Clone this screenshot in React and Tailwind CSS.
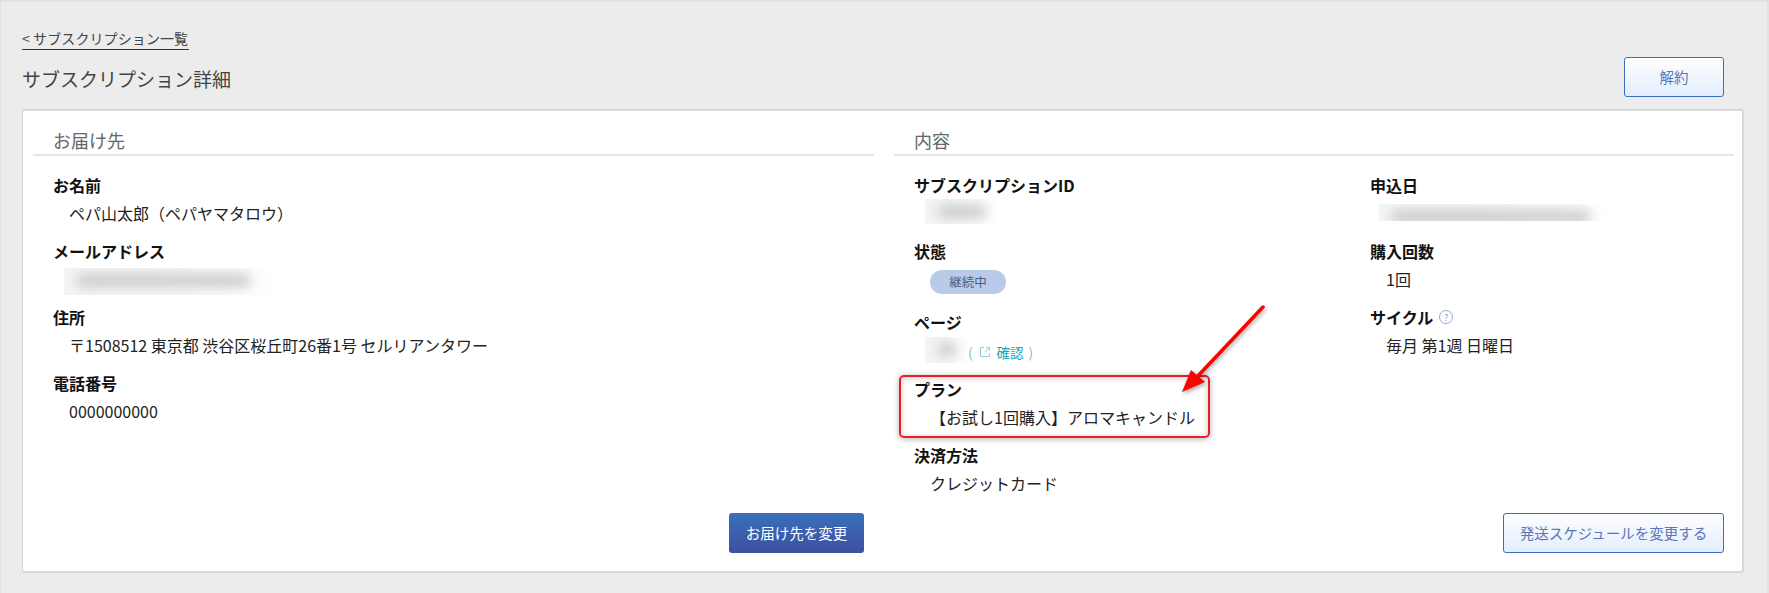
const font = { fontFamily: '"Noto Sans CJK JP", "Liberation Sans", sans-serif' };

const Label = ({ children }) => (
  <div className="h-[24px] text-[16px] leading-[24px] font-bold text-[#111]">{children}</div>
);

const Value = ({ children }) => (
  <div className="h-[42px] whitespace-nowrap pl-[16px] pt-[4px] text-[16px] leading-[24px] text-[#222]">{children}</div>
);

// blurred-out personal data
const Blur = ({ w, h = 26, inner, ml = 0 }) => (
  <div className="overflow-hidden bg-gradient-to-r from-[#f4f4f4] via-[#f6f6f6] to-white" style={{ width: w, height: h, marginLeft: ml }}>
    <div className="mx-[12px] mt-[6px] h-[13px] rounded-full bg-[#cbcbcb] blur-[6px]" style={{ width: inner }} />
  </div>
);

const SectionHead = ({ children }) => (
  <div className="h-[45px] border-b-2 border-[#e6e6e6] pl-[20px] pt-[16px] text-[18px] leading-[26px] text-[#666]">
    {children}
  </div>
);

export default function App() {
  return (
    <div style={font} className="relative h-[593px] w-[1769px] overflow-hidden border-t-2 border-l border-r-2 border-[#e2e2e2] bg-[#ececec]">
      <div className="px-[21px] pt-[26px]">
        <a className="block w-[167px] whitespace-nowrap border-b border-[#333] pb-[1px] text-[14px] leading-[20px] tracking-[0.1px] text-[#444]">
          &lt; サブスクリプション一覧
        </a>
        <div className="flex h-[59px] items-start justify-between">
          <h1 className="mt-[15px] text-[19px] leading-[28px] text-[#444]">サブスクリプション詳細</h1>
          <button className="mr-[22px] mt-[7px] h-[40px] w-[100px] rounded-[3px] border border-[#3a6ebd] bg-gradient-to-b from-white to-[#e2edfd] text-[14.5px] text-[#5a76b8]">
            解約
          </button>
        </div>

        <div className="flex h-[464px] w-[1722px] gap-[20px] rounded-[3px] border-t-2 border-r-2 border-b-2 border-l border-[#d8d8d8] bg-white pl-[10px] pr-[8px]">
          {/* お届け先 */}
          <section className="flex w-[841px] flex-col">
            <SectionHead>お届け先</SectionHead>
            <div className="flex-1 pl-[20px] pt-[17px]">
              <Label>お名前</Label>
              <Value>ペパ山太郎（ペパヤマタロウ）</Value>
              <Label>メールアドレス</Label>
              <div className="h-[42px] pt-[5px]"><Blur w={213} h={27} inner={175} ml={11} /></div>
              <Label>住所</Label>
              <Value>〒1508512 東京都 渋谷区桜丘町26番1号 セルリアンタワー</Value>
              <Label>電話番号</Label>
              <Value>0000000000</Value>
            </div>
            <div className="flex justify-end pb-[18px] pr-[10px]">
              <button className="h-[40px] w-[135px] rounded-[3px] bg-gradient-to-b from-[#3a6fbd] to-[#3b50a0] text-[14.5px] text-white">
                お届け先を変更
              </button>
            </div>
          </section>

          {/* 内容 */}
          <section className="flex w-[840px] flex-col">
            <SectionHead>内容</SectionHead>
            <div className="flex flex-1 pl-[20px] pt-[17px]">
              <div className="w-[456px]">
                <Label>サブスクリプションID</Label>
                <div className="h-[42px] pt-[2px]"><Blur w={74} h={25} inner={50} ml={11} /></div>
                <Label>状態</Label>
                <div className="h-[47px] pl-[16px] pt-[7px]">
                  <span className="flex h-[24px] w-[76px] items-center justify-center rounded-full bg-[#b9cbe9] text-[12.5px] text-[#4a5f85]">
                    継続中
                  </span>
                </div>
                <Label>ページ</Label>
                <div className="flex h-[43px] items-start pt-[3px]">
                  <Blur w={43} inner={20} ml={11} />
                  <span className="flex h-[30px] items-center whitespace-nowrap text-[13.5px] text-[#17a9b0]">
                    <span className="text-[#6fc3c8]">(</span>
                    <svg width="12" height="12" viewBox="0 0 12 12" fill="none" stroke="#9ccdd2" strokeWidth="1" className="ml-[6px] mr-[6px]">
                      <path d="M5 1.5H1.5v9h9V7M5.5 6.5L10.5 1.5M7 1.5h3.5V5" />
                    </svg>
                    <span>確認</span>
                    <span className="ml-[5px] text-[#6fc3c8]">)</span>
                  </span>
                </div>
                <Label>プラン</Label>
                <Value>【お試し1回購入】アロマキャンドル</Value>
                <Label>決済方法</Label>
                <Value>クレジットカード</Value>
              </div>
              <div>
                <Label>申込日</Label>
                <div className="h-[42px] pt-[7px]"><Blur w={231} h={17} inner={200} ml={9} /></div>
                <Label>購入回数</Label>
                <Value>1回</Value>
                <Label>
                  <span className="flex items-center gap-[6px]">
                    サイクル
                    <span className="flex h-[14px] w-[14px] items-center justify-center rounded-full border border-[#9aa5d8] text-[9px] font-normal leading-none text-[#8a96cc]">?</span>
                  </span>
                </Label>
                <Value>毎月 第1週 日曜日</Value>
              </div>
            </div>
            <div className="flex justify-end pb-[18px] pr-[10px]">
              <button className="h-[40px] w-[221px] rounded-[3px] border border-[#3a6ebd] bg-gradient-to-b from-white to-[#e2edfd] text-[14.5px] text-[#5a76b8]">
                発送スケジュールを変更する
              </button>
            </div>
          </section>
        </div>
      </div>

      {/* annotation */}
      <div className="absolute left-[898px] top-[373px] h-[63px] w-[311px] rounded-[5px] border-2 border-[#f01c24] shadow-[0_1px_6px_rgba(0,0,0,0.3),inset_0_1px_6px_rgba(0,0,0,0.2)]" />
      <svg className="absolute left-[1169px] top-[293px]" width="110" height="110" viewBox="0 0 110 110" style={{ filter: "drop-shadow(1px 2px 2px rgba(0,0,0,0.35))" }}>
        <path d="M93 12L26 83" stroke="#f00" strokeWidth="3.5" strokeLinecap="round" />
        <path d="M12 97L21 75L35 87Z" fill="#f00" />
      </svg>
    </div>
  );
}
